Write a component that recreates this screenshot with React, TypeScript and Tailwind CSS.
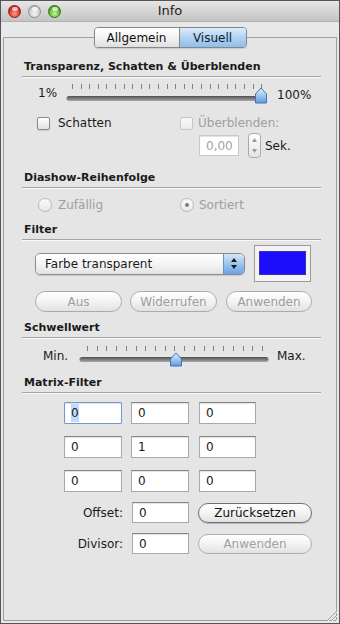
import React from "react";

const field =
  "bg-white border border-[#a9a9a9] border-t-[#858585] shadow-[inset_0_1px_1px_rgba(0,0,0,0.12)] flex items-center pl-[6px] text-[12px] text-[#1a1a1a]";

const pill =
  "rounded-full border bg-gradient-to-b from-[#ffffff] via-[#f3f3f3] to-[#e2e2e2] flex items-center justify-center text-[12px]";

function SectionHeader({ title }: { title: string }) {
  return (
    <div>
      <div className="pl-[20px] h-[16px] leading-[16px] text-[11px] font-bold text-[#1a1a1a]">{title}</div>
      <div className="mt-[1px] ml-[18px] mr-[15px] h-px bg-[#a4a4a4] shadow-[0_1px_0_#f8f8f8]" />
    </div>
  );
}

function Thumb({ cx, top, h, id }: { cx: number; top: number; h: number; id: string }) {
  const d = `M${cx - 5.5},${top + h} L${cx - 5.5},${top + 6} L${cx},${top} L${cx + 5.5},${top + 6} L${cx + 5.5},${top + h} Z`;
  return (
    <>
      <defs>
        <linearGradient id={id} x1="0" y1="0" x2="0" y2="1">
          <stop offset="0" stopColor="#e4f0fb" />
          <stop offset="0.45" stopColor="#a9cbef" />
          <stop offset="1" stopColor="#5b9ae0" />
        </linearGradient>
      </defs>
      <path d={d} fill={`url(#${id})`} stroke="#4373b3" strokeWidth="1" strokeLinejoin="round" />
    </>
  );
}

function Track({ w, y, id }: { w: number; y: number; id: string }) {
  return (
    <>
      <defs>
        <linearGradient id={id} x1="0" y1="0" x2="0" y2="1">
          <stop offset="0" stopColor="#4f4f4f" />
          <stop offset="1" stopColor="#a8a8a8" />
        </linearGradient>
      </defs>
      <rect x="0.5" y={y} width={w} height="5" rx="2.5" fill={`url(#${id})`} />
    </>
  );
}

function TopSlider() {
  const ticks = Array.from({ length: 23 }, (_, i) => Math.round(6 + i * 8.6));
  return (
    <svg width="202" height="22">
      {ticks.map((x) => (
        <rect key={x} x={x} y={1} width={1} height={5} fill="#808080" />
      ))}
      <Track w={197} y={13} id="trk1" />
      <Thumb cx={195} top={5} h={15} id="th1" />
    </svg>
  );
}

function ThresholdSlider() {
  const ticks = Array.from({ length: 19 }, (_, i) => Math.round(8 + i * 9.72));
  return (
    <svg width="190" height="24">
      {ticks.map((x) => (
        <rect key={x} x={x} y={2} width={1} height={5} fill="#808080" />
      ))}
      <Track w={189} y={13} id="trk2" />
      <Thumb cx={97} top={9} h={13} id="th2" />
    </svg>
  );
}

function Checkbox({ disabled }: { disabled?: boolean }) {
  return (
    <div
      className={
        disabled
          ? "w-[13px] h-[13px] rounded-[2px] border border-[#c6c6c6] bg-gradient-to-b from-[#f8f8f8] to-[#ececec]"
          : "w-[13px] h-[13px] rounded-[2px] border border-[#8a8a8a] bg-gradient-to-b from-white to-[#e2e2e2] shadow-[0_1px_1px_rgba(0,0,0,0.12)]"
      }
    />
  );
}

function Radio({ checked }: { checked?: boolean }) {
  return (
    <div className="w-[14px] h-[14px] rounded-full border border-[#b9b9b9] bg-gradient-to-b from-[#fbfbfb] to-[#e9e9e9] flex items-center justify-center">
      {checked && <div className="w-[4px] h-[4px] rounded-full bg-[#7c7c7c]" />}
    </div>
  );
}

function Stepper() {
  return (
    <div className="w-[13px] h-[25px] rounded-[4px] border border-[#a9a9a9] bg-gradient-to-b from-white to-[#e6e6e6] flex flex-col items-center justify-between py-[4px]">
      <svg width="5" height="4">
        <path d="M0,4 L2.5,0 L5,4 Z" fill="#9a9a9a" />
      </svg>
      <svg width="5" height="4">
        <path d="M0,0 L2.5,4 L5,0 Z" fill="#9a9a9a" />
      </svg>
    </div>
  );
}

function TrafficLight({ color }: { color: "red" | "gray" | "green" }) {
  const cls = {
    red: "bg-[radial-gradient(circle_at_50%_70%,#ff9a8c_0%,#e0352a_55%,#a3150d_100%)] border-[#8a1a12]",
    gray: "bg-[radial-gradient(circle_at_50%_70%,#f4f4f4_0%,#cfcfcf_55%,#9c9c9c_100%)] border-[#8c8c8c]",
    green: "bg-[radial-gradient(circle_at_50%_70%,#c8f59e_0%,#5cb92c_55%,#2e7d14_100%)] border-[#2f7016]",
  }[color];
  return (
    <div className={`w-[13px] h-[13px] rounded-full border ${cls} relative`}>
      <div className="absolute left-[3px] top-[1px] w-[6px] h-[4px] rounded-full bg-white/70" />
    </div>
  );
}

export default function App() {
  return (
    <div className="w-[340px] h-[624px] relative flex flex-col border border-[#555555] bg-[#e8e8e8] overflow-hidden font-['DejaVu_Sans',sans-serif] text-[#1a1a1a]">
      {/* title bar */}
      <div className="h-[21px] grid grid-cols-[1fr_auto_1fr] items-center bg-gradient-to-b from-[#e6e6e6] to-[#c4c4c4] border-b border-[#b0b0b0]">
        <div className="flex items-center gap-[7px] pl-[7px]">
          <TrafficLight color="red" />
          <TrafficLight color="gray" />
          <TrafficLight color="green" />
        </div>
        <div className="text-[13px] leading-[20px] text-[#222]">Info</div>
        <div />
      </div>

      {/* segmented control */}
      <div className="relative z-10 mt-[5px] flex justify-center">
        <div className="flex h-[21px] rounded-[4px] border border-[#878787] overflow-hidden shadow-[0_1px_1px_rgba(0,0,0,0.12)] text-[12px]">
          <div className="w-[85px] flex items-center justify-center bg-gradient-to-b from-white via-[#f4f4f4] to-[#dfdfdf] border-r border-[#878787] text-[#111]">
            Allgemein
          </div>
          <div className="w-[66px] flex items-center justify-center bg-gradient-to-b from-[#dcebfa] via-[#b3d2f2] to-[#8ebeec] text-[#0d1b2e]">
            Visuell
          </div>
        </div>
      </div>

      {/* tab box */}
      <div className="-mt-[11px] mx-[2px] mb-[2px] flex-1 border border-[#a0a0a0] bg-[#e5e5e5] flex flex-col">
        <div className="mt-[21px]">
          <SectionHeader title="Transparenz, Schatten & Überblenden" />
        </div>

        <div className="mt-[6px] ml-[34px] h-[22px] flex items-center text-[12px]">
          <div className="w-[28px] -mt-[2px]">1%</div>
          <TopSlider />
          <div className="ml-[9px] mt-[2px]">100%</div>
        </div>

        <div className="mt-[10px] ml-[33px] h-[16px] flex items-center text-[12px]">
          <div className="w-[143px] flex items-center gap-[8px]">
            <Checkbox />
            <span>Schatten</span>
          </div>
          <div className="flex items-center gap-[5px]">
            <Checkbox disabled />
            <span className="text-[#a0a0a0]">Überblenden:</span>
          </div>
        </div>

        <div className="mt-[2px] ml-[195px] h-[25px] flex items-center text-[12px]">
          <div className={`${field} w-[40px] h-[21px] !text-[#a3a3a3] !border-[#c9c9c9]`}>0,00</div>
          <div className="ml-[9px]">
            <Stepper />
          </div>
          <div className="ml-[4px]">Sek.</div>
        </div>

        <div className="mt-[12px]">
          <SectionHeader title="Diashow-Reihenfolge" />
        </div>

        <div className="mt-[9px] ml-[34px] h-[16px] flex items-center text-[12px] text-[#a0a0a0]">
          <div className="w-[142px] flex items-center gap-[6px]">
            <Radio />
            <span>Zufällig</span>
          </div>
          <div className="flex items-center gap-[5px]">
            <Radio checked />
            <span>Sortiert</span>
          </div>
        </div>

        <div className="mt-[9px]">
          <SectionHeader title="Filter" />
        </div>

        <div className="mt-[5px] ml-[31px] h-[37px] flex items-center">
          <div className="w-[210px] h-[22px] flex rounded-[5px] border border-[#8a8a8a] overflow-hidden shadow-[0_1px_1px_rgba(0,0,0,0.12)]">
            <div className="flex-1 flex items-center pl-[9px] text-[12px] bg-gradient-to-b from-white via-[#f5f5f5] to-[#e3e3e3]">
              Farbe transparent
            </div>
            <div className="w-[21px] flex flex-col items-center justify-center gap-[3px] border-l border-[#6f93c0] bg-gradient-to-b from-[#d5e7f9] via-[#9cc5ee] to-[#6aa6e4]">
              <svg width="6" height="4">
                <path d="M0,4 L3,0 L6,4 Z" fill="#1a1a1a" />
              </svg>
              <svg width="6" height="4">
                <path d="M0,0 L3,4 L6,0 Z" fill="#1a1a1a" />
              </svg>
            </div>
          </div>
          <div className="ml-[9px] w-[57px] h-[37px] border border-[#9b9b9b] bg-[#f3f3f3] pt-[5px] pl-[4px]">
            <div className="w-[47px] h-[24px] bg-[#1c0dfb] border border-[#3a2fb0]" />
          </div>
        </div>

        <div className="mt-[9px] ml-[31px] h-[21px] flex text-[#9d9d9d]">
          <div className={`${pill} w-[87px] border-[#ababab]`}>Aus</div>
          <div className={`${pill} ml-[8px] w-[87px] border-[#ababab]`}>Widerrufen</div>
          <div className={`${pill} ml-[9px] w-[86px] border-[#ababab]`}>Anwenden</div>
        </div>

        <div className="mt-[8px]">
          <SectionHeader title="Schwellwert" />
        </div>

        <div className="mt-[6px] ml-[39px] h-[24px] flex items-center text-[12px]">
          <div className="w-[36px]">Min.</div>
          <ThresholdSlider />
          <div className="ml-[8px]">Max.</div>
        </div>

        <div className="mt-[7px]">
          <SectionHeader title="Matrix-Filter" />
        </div>

        <div className="mt-[9px] ml-[60px] flex h-[22px]">
          <div className={`${field} w-[58px] h-[22px] rounded-[1px] !border-[#6e98d2] shadow-[0_0_0_2px_#8fb4e8,0_0_3px_3px_rgba(120,165,225,0.55)]`}>
            <span className="bg-[#c2dafc]">0</span>
          </div>
          <div className={`${field} ml-[9px] w-[58px] h-[22px]`}>0</div>
          <div className={`${field} ml-[10px] w-[57px] h-[22px]`}>0</div>
        </div>

        <div className="mt-[12px] ml-[60px] flex h-[22px]">
          <div className={`${field} w-[58px] h-[22px]`}>0</div>
          <div className={`${field} ml-[9px] w-[58px] h-[22px]`}>1</div>
          <div className={`${field} ml-[10px] w-[57px] h-[22px]`}>0</div>
        </div>

        <div className="mt-[12px] ml-[60px] flex h-[22px]">
          <div className={`${field} w-[58px] h-[22px]`}>0</div>
          <div className={`${field} ml-[9px] w-[58px] h-[22px]`}>0</div>
          <div className={`${field} ml-[10px] w-[57px] h-[22px]`}>0</div>
        </div>

        <div className="mt-[10px] flex items-center h-[21px] text-[12px]">
          <div className="w-[119px] text-right">Offset:</div>
          <div className={`${field} ml-[9px] w-[57px] h-[21px]`}>0</div>
          <div className={`${pill} ml-[9px] w-[114px] h-[20px] border-[#707070] text-[#111] shadow-[0_1px_1px_rgba(0,0,0,0.2)]`}>
            Zurücksetzen
          </div>
        </div>

        <div className="mt-[10px] flex items-center h-[21px] text-[12px]">
          <div className="w-[119px] text-right">Divisor:</div>
          <div className={`${field} ml-[9px] w-[57px] h-[21px]`}>0</div>
          <div className={`${pill} ml-[9px] w-[114px] h-[20px] border-[#b0b0b0] text-[#a0a0a0]`}>Anwenden</div>
        </div>
      </div>

      {/* resize grip */}
      <svg className="absolute right-[1px] bottom-[1px]" width="14" height="14">
        <path d="M13,3 L3,13 M13,7 L7,13 M13,11 L11,13" stroke="#9a9a9a" strokeWidth="1" />
        <path d="M13,4 L4,13 M13,8 L8,13 M13,12 L12,13" stroke="#f7f7f7" strokeWidth="1" />
      </svg>
    </div>
  );
}
